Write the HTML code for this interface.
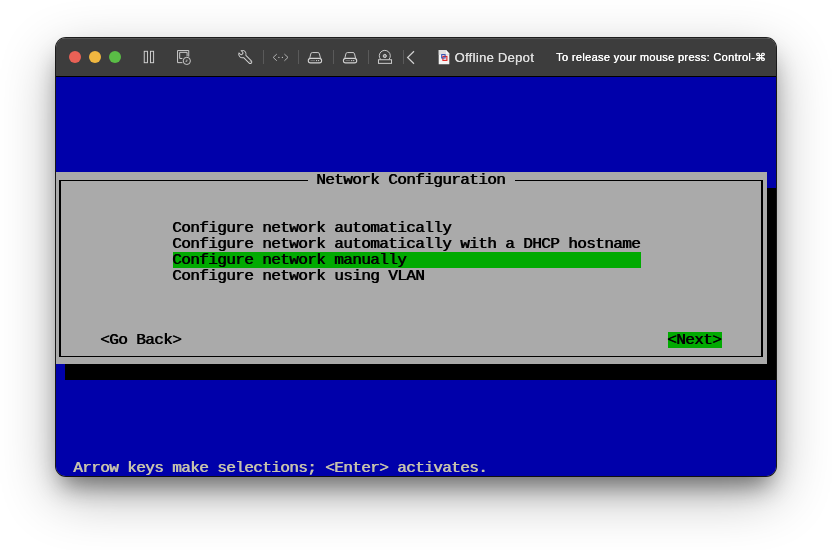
<!DOCTYPE html>
<html><head><meta charset="utf-8">
<style>
html,body{margin:0;padding:0;}
body{width:832px;height:550px;overflow:hidden;background:#fff;position:relative;font-family:"Liberation Sans",sans-serif;}
#win{position:absolute;left:56px;top:37.6px;width:720px;height:438.4px;border-radius:10px;background:linear-gradient(#3d3d3d 0,#3d3d3d 50%,#0000aa 50%);
 box-shadow:0 0 0 1px rgba(0,0,0,.88),0 19px 55px rgba(0,0,0,.3),0 15px 25px -6px rgba(0,0,0,.46);}
#clip{position:absolute;left:0;top:0;width:720px;height:438.4px;border-radius:10px;overflow:hidden;}
#tb{will-change:transform;position:absolute;left:0;top:0;width:720px;height:38px;background:#3d3d3d;border-bottom:1px solid #000;box-shadow:inset 0 0.8px 0 rgba(255,255,255,.16);}
.dot{position:absolute;top:13px;width:12px;height:12px;border-radius:50%;}
#scr{will-change:transform;position:absolute;left:0;top:38.4px;width:720px;height:400px;background:#0000aa;overflow:hidden;}
.t{position:absolute;height:16px;line-height:18px;font-family:"Liberation Mono",monospace;font-size:15px;white-space:pre;color:#000;}
.t span{display:inline-block;position:relative;left:-1.5px;transform:scaleX(1.06);transform-origin:0 0;letter-spacing:-0.511px;text-shadow:0.7px 0 0 currentColor;}
</style></head><body>
<div id="win"><div id="clip">
 <div id="scr">
  <div style="position:absolute;left:9px;top:112px;width:711px;height:192px;background:#000"></div>
  <div style="position:absolute;left:0;top:96px;width:711px;height:192px;background:#aaaaaa"></div>
  <!-- box lines -->
  <div style="position:absolute;left:3px;top:104px;width:249px;height:1px;background:#000"></div>
  <div style="position:absolute;left:459px;top:104px;width:248px;height:1px;background:#000"></div>
  <div style="position:absolute;left:3px;top:104px;width:2px;height:177px;background:#000"></div>
  <div style="position:absolute;left:705px;top:104px;width:2px;height:177px;background:#000"></div>
  <div style="position:absolute;left:3px;top:280px;width:704px;height:1px;background:#000"></div>
  <div class="t" style="left:261px;top:96px"><span>Network Configuration</span></div>
  <div class="t" style="left:117px;top:144px"><span>Configure network automatically</span></div>
  <div class="t" style="left:117px;top:160px"><span>Configure network automatically with a DHCP hostname</span></div>
  <div class="t" style="left:117px;top:176px;width:468px;background:#00aa00"><span>Configure network manually</span></div>
  <div class="t" style="left:117px;top:192px"><span>Configure network using VLAN</span></div>
  <div class="t" style="left:45px;top:256px"><span>&lt;Go Back&gt;</span></div>
  <div class="t" style="left:612px;top:256px;width:54px;background:#00aa00"><span>&lt;Next&gt;</span></div>
  <div class="t" style="left:18px;top:384px;color:#c6c2ad"><span>Arrow keys make selections; &lt;Enter&gt; activates.</span></div>
 </div>
 <div id="tb"><div style="position:absolute;left:0;top:0.4px;width:720px;height:38px">
  <div class="dot" style="left:13px;background:#e96156"></div>
  <div class="dot" style="left:33px;background:#f0b740"></div>
  <div class="dot" style="left:53px;background:#5abd46"></div>

  <svg style="position:absolute;left:0;top:0" width="720" height="38" viewBox="56 38 720 38" fill="none" stroke="#d2d2d2" stroke-width="0.95">
   <!-- pause -->
   <rect x="144.25" y="51.3" width="3.2" height="11.4"/>
   <rect x="150.5" y="51.3" width="3.1" height="11.4"/>
   <!-- snapshot -->
   <path d="M182.4 62.65H177.55V50.55H188.75V56.6"/>
   <path d="M182.4 58.5H179.7V52.35H187.1V56.3"/>
   <circle cx="186.8" cy="60.9" r="3.6"/>
   <path d="M186.9 59.6V61.3H185.5" stroke-width="0.8"/>
   <!-- wrench -->
   <g transform="translate(242.4 54.1) rotate(-45)">
    <path d="M-1.6 -3.34V-1L-0.9 -0.1H0.9L1.6 -1V-3.34A3.7 3.7 0 0 1 1.55 3.36V11.1A1.55 1.55 0 0 1 -1.55 11.1V3.36A3.7 3.7 0 0 1 -1.6 -3.34Z" stroke-linejoin="round"/>
    <circle cx="0" cy="10.9" r="0.5" fill="#d2d2d2" stroke="none"/>
   </g>
   <!-- separators -->
   <g stroke="#5a5a5a" stroke-width="1">
    <path d="M263.5 50V64M298.5 50V64M333.5 50V64M368.5 50V64M403.5 50V64"/>
   </g>
   <!-- resize arrows -->
   <g stroke="#bdbdbd" stroke-width="0.9">
    <path d="M276.8 54.1L273.2 57.4L276.8 60.8M284.4 54.1L288 57.4L284.4 60.8"/>
    <circle cx="278.9" cy="57.4" r="0.62" fill="#c4c4c4" stroke="none"/>
    <circle cx="282.4" cy="57.4" r="0.62" fill="#c4c4c4" stroke="none"/>
   </g>
   <!-- disk 1 -->
   <g>
    <path d="M309.7 58.3L310.8 53.8Q311.1 52.55 312.3 52.55H317.9Q319.1 52.55 319.4 53.8L320.5 58.3"/>
    <rect x="308.3" y="58.35" width="13.3" height="4.5" rx="2.2" stroke-width="1.1"/>
    <path d="M310.5 60.6H315" stroke="#8a8a8a" stroke-width="0.7"/>
    <circle cx="316.6" cy="60.6" r="0.65" fill="#d8d8d8" stroke="none"/>
    <circle cx="318.6" cy="60.6" r="0.65" fill="#d8d8d8" stroke="none"/>
   </g>
   <!-- disk 2 -->
   <g transform="translate(35.1 0)">
    <path d="M309.7 58.3L310.8 53.8Q311.1 52.55 312.3 52.55H317.9Q319.1 52.55 319.4 53.8L320.5 58.3"/>
    <rect x="308.3" y="58.35" width="13.3" height="4.5" rx="2.2" stroke-width="1.1"/>
    <path d="M310.5 60.6H315" stroke="#8a8a8a" stroke-width="0.7"/>
    <circle cx="316.6" cy="60.6" r="0.65" fill="#d8d8d8" stroke="none"/>
    <circle cx="318.6" cy="60.6" r="0.65" fill="#d8d8d8" stroke="none"/>
   </g>
   <!-- optical -->
   <path d="M380.5 59.3A5.5 5.5 0 1 1 389.1 59.3"/>
   <rect x="378.45" y="59.75" width="13.1" height="3.6"/>
   <circle cx="384.8" cy="56" r="1.6" fill="#8c8c8c"/>
   <!-- chevron -->
   <path d="M414 51.2L407.6 57.5L414 63.7" stroke-width="1.2" stroke="#d2d2d2"/>
   <!-- doc icon -->
   <g stroke="none">
    <path d="M438.7 50H446L449.3 53.4V64.2H438.7Z" fill="#f4f4f4"/>
    <path d="M438.7 50H446V53.4H449.3V55H438.7Z" fill="#d4d4d4" opacity="0.7"/>
    <path d="M446 50L449.3 53.4H446Z" fill="#fafafa"/>
    <rect x="442.9" y="56.4" width="4" height="4" fill="none" stroke="#e02020" stroke-width="1.1"/>
    <rect x="441.7" y="54.6" width="3.4" height="3.4" fill="none" stroke="#2a49b0" stroke-width="1"/>
   </g>
  </svg>
  <div style="position:absolute;left:398.5px;top:11.5px;font-size:13px;line-height:16px;color:#dedede;white-space:nowrap;letter-spacing:0.3px;text-shadow:0.25px 0 0 #dedede">Offline Depot</div>
  <div style="position:absolute;left:500px;top:12px;font-size:11px;line-height:14px;color:#fff;white-space:nowrap;letter-spacing:0.34px;text-shadow:0.35px 0 0 #fff">To release your mouse press: Control-⌘</div>
 </div></div>
</div></div>
</body></html>
